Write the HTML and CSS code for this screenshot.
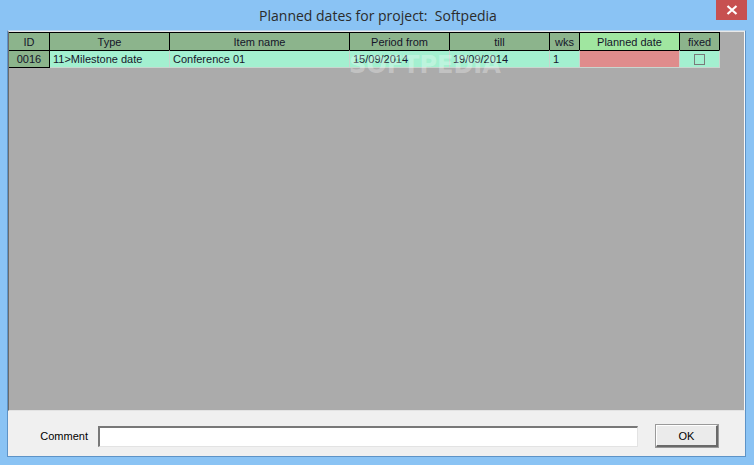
FILE: index.html
```html
<!DOCTYPE html>
<html>
<head>
<meta charset="utf-8">
<link rel="stylesheet" href="styles.css">
</head>
<body>
<div class="window">
  <div class="titlebar">
    <div class="title">Planned dates for project:&nbsp; Softpedia</div>
    <div class="close"><svg width="12" height="10" viewBox="0 0 12 10"><path d="M1.5 1 L10.5 9 M10.5 1 L1.5 9" stroke="#fff" stroke-width="2.2"/></svg></div>
  </div>
  <div class="client">
    <div class="gridarea">
      <div class="grid">
        <div class="hc first">ID</div>
        <div class="hc">Type</div>
        <div class="hc">Item name</div>
        <div class="hc">Period from</div>
        <div class="hc">till</div>
        <div class="hc">wks</div>
        <div class="hc planned">Planned date</div>
        <div class="hc">fixed</div>
        <div class="dc idcell">0016</div>
        <div class="dc">11&gt;Milestone date</div>
        <div class="dc">Conference 01</div>
        <div class="dc">15/09/2014</div>
        <div class="dc">19/09/2014</div>
        <div class="dc">1</div>
        <div class="dc pink"></div>
        <div class="dc center"><span class="check"></span></div>
      </div>
      <div class="watermark">SOFTPEDIA</div>
    </div>
    <div class="panel">
      <label class="label">Comment</label>
      <div class="input"></div>
      <div class="button">OK</div>
    </div>
  </div>
</div>
</body>
</html>
```

FILE: styles.css
```css
html, body {
  margin: 0;
  padding: 0;
}
body {
  width: 754px;
  height: 465px;
  overflow: hidden;
  background: #8ac3f4;
  font-family: "Liberation Sans", sans-serif;
}
.window {
  display: flex;
  flex-direction: column;
  width: 754px;
  height: 465px;
}
.titlebar {
  height: 30px;
  position: relative;
  display: flex;
  align-items: center;
  justify-content: center;
}
.title {
  font-family: "Open Sans", "Noto Sans", sans-serif;
  font-size: 14px;
  color: #2b2b2b;
  padding-top: 1px;
  padding-left: 2px;
}
.close {
  position: absolute;
  right: 7px;
  top: 0;
  width: 31px;
  height: 20px;
  background: #c75050;
  display: flex;
  align-items: center;
  justify-content: center;
}
.client {
  margin: 0 8px 8px 7px;
  flex: 1;
  display: flex;
  flex-direction: column;
  border: 1px solid #5d93c7;
  border-top-color: #b9d5ee;
  background: #f0f0f0;
}
.gridarea {
  flex: 1;
  position: relative;
  background: #ababab;
  border-top: 1px solid #e8e8e8;
  border-left: 1px solid #6b6b6b;
  border-right: 1px solid #f8f8f8;
  border-bottom: 1px solid #e3e3e3;
  overflow: hidden;
}
.grid {
  display: grid;
  grid-template-columns: 41px 120px 180px 100px 100px 30px 100px 40px;
  grid-template-rows: 18px 18px;
  font-family: "Liberation Sans", sans-serif;
  font-size: 11px;
  color: #15152a;
}
.hc {
  background: #8cb48c;
  border-top: 1px solid #000;
  border-right: 1px solid #000;
  display: flex;
  align-items: center;
  justify-content: center;
  box-sizing: border-box;
  height: 18px;
}
.hc.planned {
  background: #a0e6a0;
}
.dc {
  background: #a3f0d0;
  border-right: 1px solid #c9d6cf;
  border-bottom: 1px solid #c9d6cf;
  border-top: 1px solid #000;
  box-sizing: border-box;
  height: 18px;
  display: flex;
  align-items: center;
  padding-left: 3px;
}
.dc.idcell {
  background: #8cb48c;
  border-right: 1px solid #000;
  border-bottom: 1px solid #000;
  justify-content: center;
  padding-left: 0;
}
.dc.pink {
  background: #df8c8c;
}
.dc.center {
  justify-content: center;
  padding-left: 0;
}
.check {
  width: 9px;
  height: 9px;
  border: 1px solid #7a7a7a;
}
.watermark {
  position: absolute;
  left: 340px;
  top: 19px;
  font-family: "DejaVu Sans", sans-serif;
  font-weight: bold;
  font-size: 24px;
  color: rgba(255,255,255,0.3);
  pointer-events: none;
}
.panel {
  height: 45px;
  box-sizing: border-box;
  padding-top: 5px;
  display: flex;
  align-items: center;
  font-family: "Liberation Sans", sans-serif;
  font-size: 11px;
  color: #000;
}
.label {
  width: 80px;
  text-align: right;
  margin-right: 10px;
}
.input {
  width: 537px;
  height: 18px;
  background: #fff;
  border-top: 2px solid #787878;
  border-left: 2px solid #787878;
  border-right: 1px solid #e3e3e3;
  border-bottom: 1px solid #e3e3e3;
}
.button {
  margin-left: 18px;
  width: 59px;
  height: 19px;
  background: #ebebeb;
  border-top: 1px solid #fff;
  border-left: 1px solid #fff;
  border-right: 2px solid #696969;
  border-bottom: 2px solid #696969;
  outline: 1px solid #9a9a9a;
  display: flex;
  align-items: center;
  justify-content: center;
}
```
